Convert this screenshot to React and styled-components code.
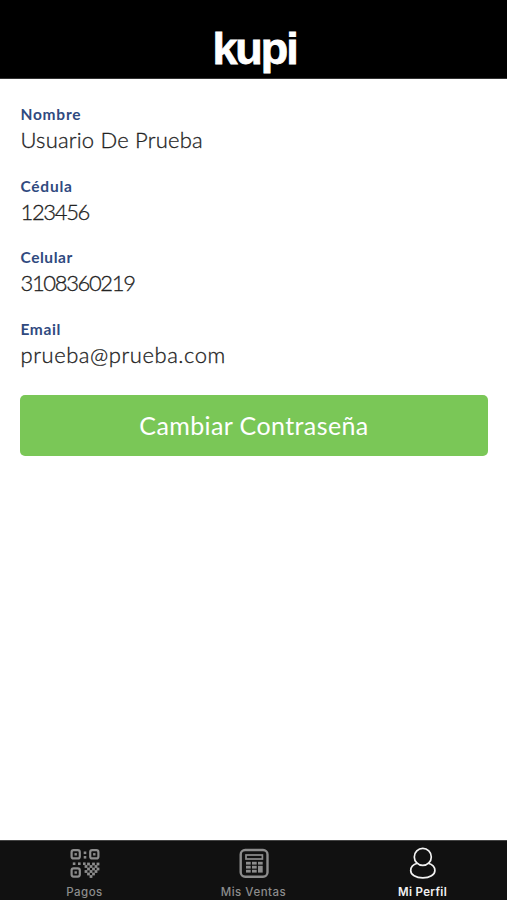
import React, { useState } from 'react';
import styled, { createGlobalStyle } from 'styled-components';

const GlobalStyle = createGlobalStyle`
  body {
    margin: 0;
    padding: 0;
    background-color: #fff;
    font-family: Lato, "Open Sans", sans-serif;
  }
`;

const Screen = styled.div`
  display: flex;
  flex-direction: column;
  width: 100%;
  height: 100vh;
  overflow: hidden;
`;

const Header = styled.header`
  display: flex;
  justify-content: center;
  box-sizing: border-box;
  flex-shrink: 0;
  height: 79px;
  padding-top: 22px;
  background-color: #000;
  border-bottom: 1px solid #333;
`;

const Logo = styled.div`
  margin-left: 2px;
  color: #fff;
  font-family: "Liberation Sans", Arial, sans-serif;
  font-size: 45px;
  font-weight: bold;
  line-height: 53px;
  letter-spacing: -2.1px;
  -webkit-text-stroke: 0.8px #fff;
`;

const Content = styled.main`
  flex: 1;
  padding: 25px 19px 0 20px;
`;

const Field = styled.div`
  height: 71.6px;
`;

const Label = styled.div`
  color: #304a80;
  font-size: 15.5px;
  font-weight: bold;
  line-height: 20px;
  padding-left: 0.5px;
  letter-spacing: ${({ $spacing }) => $spacing || 0}px;
`;

const Value = styled.div`
  padding-left: 0.5px;
  color: #222;
  font-size: 22px;
  font-weight: 300;
  line-height: 32px;
  letter-spacing: ${({ $spacing }) => $spacing || 0}px;
  white-space: nowrap;
  -webkit-text-stroke: 0.3px #222;
`;

const PasswordButton = styled.button`
  display: block;
  width: 100%;
  height: 61px;
  margin-top: 5px;
  padding: 0 0 2px;
  border: none;
  border-radius: 5px;
  background-color: #7ac757;
  color: #fff;
  font-family: inherit;
  font-size: 25px;
  letter-spacing: 0.4px;
  cursor: pointer;
`;

const TabBar = styled.nav`
  display: flex;
  box-sizing: border-box;
  flex-shrink: 0;
  height: 60px;
  background-color: #111;
  border-top: 1px solid #444;
`;

const Tab = styled.button`
  display: flex;
  flex: 1;
  flex-direction: column;
  align-items: center;
  padding: 6px 0 0;
  border: none;
  background: none;
  color: ${({ $active }) => ($active ? '#f2f2f2' : '#8c8c8c')};
  cursor: pointer;

  svg {
    display: block;
    width: 34px;
    height: 34px;
  }
`;

const TabLabel = styled.span`
  margin-top: 4px;
  font-family: Inter, "Liberation Sans", sans-serif;
  font-size: 11.5px;
  font-weight: ${({ $active }) => ($active ? 600 : 500)};
  line-height: 14px;
  letter-spacing: ${({ $spacing }) => $spacing || 0}px;
`;

// light modules in the lower right part of the code
const qrDots = [
  [20.5, 17], [25.5, 17], [30, 17],
  [18, 19.5], [23, 19.5], [28, 19.5],
  [20.5, 22], [25.5, 22], [30, 22],
  [18, 24.5], [23, 24.5], [28, 24.5],
  [20.5, 27], [25.5, 27],
  [23, 29.5],
];

const QrIcon = () => (
  <svg viewBox="0 0 34 34" fill="none" stroke="currentColor">
    <g strokeWidth="2.2">
      <rect x="3.6" y="3.2" width="8.2" height="8.2" rx="2" />
      <rect x="22.2" y="3.2" width="8.2" height="8.2" rx="2" />
      <rect x="3.6" y="21.4" width="8.2" height="8.2" rx="2" />
    </g>
    <g fill="currentColor" stroke="none">
      <rect x="6.5" y="6.1" width="2.4" height="2.4" />
      <rect x="25.1" y="6.1" width="2.4" height="2.4" />
      <rect x="6.5" y="24.3" width="2.4" height="2.4" />
      <rect x="15.7" y="4.5" width="2.6" height="2.6" />
      <rect x="15.7" y="9" width="2.6" height="2.6" />
      <rect x="4.8" y="15.4" width="2.6" height="2.6" />
      <rect x="10" y="15.4" width="2.6" height="2.6" />
      <rect x="15" y="15.4" width="2.6" height="2.6" />
      {qrDots.map(([x, y]) => (
        <rect key={`${x}-${y}`} x={x - 1.4} y={y - 1.4} width="2.8" height="2.8" />
      ))}
    </g>
  </svg>
);

const CalculatorIcon = () => (
  <svg viewBox="0 0 34 34" fill="none" stroke="currentColor">
    <rect x="3.7" y="3" width="26.8" height="26.8" rx="4.5" strokeWidth="2.4" />
    <rect x="9" y="8" width="16.4" height="4" strokeWidth="1.7" />
    <g fill="currentColor" stroke="none">
      <rect x="9" y="14.8" width="4.7" height="2.8" />
      <rect x="15" y="14.8" width="4.7" height="2.8" />
      <rect x="21" y="14.8" width="4.7" height="2.8" />
      <rect x="9" y="18.8" width="4.7" height="2.8" />
      <rect x="15" y="18.8" width="4.7" height="2.8" />
      <rect x="9" y="22.8" width="4.7" height="2.8" />
      <rect x="15" y="22.8" width="4.7" height="2.8" />
      <rect x="21" y="18.8" width="4.7" height="6.8" />
    </g>
  </svg>
);

const ProfileIcon = () => (
  <svg viewBox="0 0 34 34" fill="none" stroke="currentColor" strokeWidth="1.7">
    <path d="M11.4 16.2C7.200 17.400 4.700 20 4.700 23.400c0 4.400 5.100 7.500 12.100 7.500s12.100-3.100 12.100-7.500c0-3.400-2.500-6-6.700-7.200" />
    <ellipse cx="16.8" cy="9.9" rx="8.5" ry="8.5" />
  </svg>
);

const fields = [
  { label: 'Nombre', value: 'Usuario De Prueba', labelSpacing: 0.75, spacing: 0.2 },
  { label: 'Cédula', value: '123456', labelSpacing: 0.75, spacing: -1.35 },
  { label: 'Celular', value: '3108360219', labelSpacing: 0.55, spacing: -1.35 },
  { label: 'Email', value: 'prueba@prueba.com', labelSpacing: 0.6, spacing: 0.55 },
];

const tabs = [
  { name: 'Pagos', icon: <QrIcon />, spacing: 0.5 },
  { name: 'Mis Ventas', icon: <CalculatorIcon />, spacing: 0.5 },
  { name: 'Mi Perfil', icon: <ProfileIcon />, spacing: 0.35 },
];

const App = () => {
  const [activeTab, setActiveTab] = useState('Mi Perfil');

  return (
    <>
      <GlobalStyle />
      <Screen>
        <Header>
          <Logo>kupi</Logo>
        </Header>
        <Content>
          {fields.map((field) => (
            <Field key={field.label}>
              <Label $spacing={field.labelSpacing}>{field.label}</Label>
              <Value $spacing={field.spacing}>{field.value}</Value>
            </Field>
          ))}
          <PasswordButton>Cambiar Contraseña</PasswordButton>
        </Content>
        <TabBar>
          {tabs.map((tab) => (
            <Tab
              key={tab.name}
              $active={activeTab === tab.name}
              onClick={() => setActiveTab(tab.name)}
            >
              {tab.icon}
              <TabLabel $active={activeTab === tab.name} $spacing={tab.spacing}>
                {tab.name}
              </TabLabel>
            </Tab>
          ))}
        </TabBar>
      </Screen>
    </>
  );
};

export default App;
